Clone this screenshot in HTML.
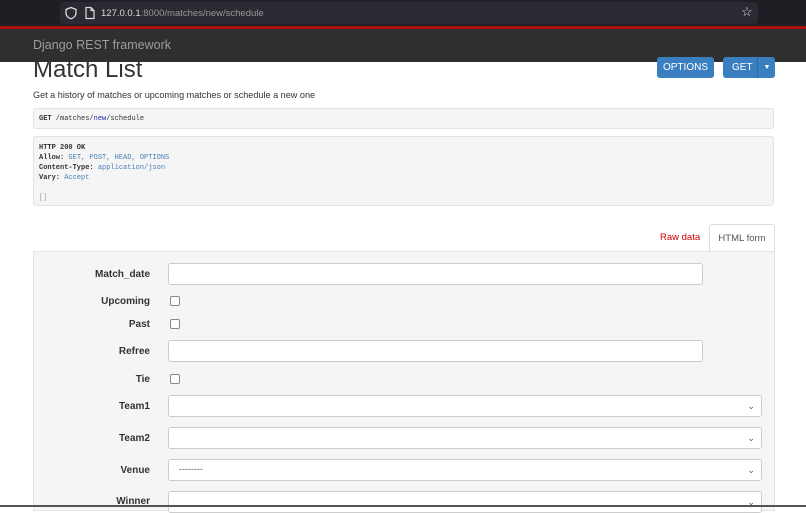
<!DOCTYPE html><html><head><style>
body{margin:0;width:806px;height:507px;overflow:hidden;background:#fff;font-family:"Liberation Sans",sans-serif;position:relative}
.a{position:absolute}
.mono{font-family:"Liberation Mono",monospace;font-size:7px;color:#333}
.b{color:#4a7fb5}
.lbl{position:absolute;right:656px;font-size:10px;font-weight:bold;color:#333;text-align:right}
.in{position:absolute;left:168px;height:22px;background:#fff;border:1px solid #ccc;border-radius:3px;box-sizing:border-box}
.cb{position:absolute;left:170px;width:8px;height:8px;border:1px solid #888;border-radius:2px;background:#fff}
.chev{position:absolute;right:6px;top:5px;font-size:9px;color:#555}
</style></head><body>
<div class="a" style="left:0;top:0;width:806px;height:27px;background:#1f1e25"></div>
<div class="a" style="left:60px;top:2px;width:698px;height:22px;background:#2b2a33;border-radius:4px"></div>
<svg class="a" style="left:64px;top:6px" width="14" height="14" viewBox="0 0 14 14"><path d="M7 1.5L12 3.5V7C12 10 9.5 12 7 12.8C4.5 12 2 10 2 7V3.5Z" fill="none" stroke="#ddd" stroke-width="1.3"/></svg>
<svg class="a" style="left:84px;top:6px" width="12" height="14" viewBox="0 0 12 14"><path d="M2 1.5H7L10 4.5V12.5H2Z M7 1.5V4.5H10" fill="none" stroke="#ddd" stroke-width="1.2"/></svg>
<div class="a" style="left:101px;top:8px;font-size:9.5px;color:#ddd">127.0.0.1<span style="color:#999">:8000/matches/new/schedule</span></div>
<div class="a" style="left:741px;top:4px;font-size:13px;color:#ddd">☆</div>
<div class="a" style="left:0;top:26px;width:806px;height:3px;background:#a11"></div>
<div class="a" style="left:0;top:29px;width:806px;height:33px;background:#2f2f2f"></div>
<div class="a" style="left:33px;top:38px;font-size:12.5px;color:#9d9d9d">Django REST framework</div>
<div class="a" style="left:33px;top:56px;font-size:24px;color:#333">Match List</div>
<div class="a" style="left:657px;top:57px;width:57px;height:21px;background:#3a80c0;border-radius:3px;color:#fff;font-size:10px;line-height:21px;text-align:center">OPTIONS</div>
<div class="a" style="left:723px;top:57px;width:52px;height:21px;background:#3a80c0;border-radius:3px;color:#fff;font-size:10px;line-height:21px"><span style="margin-left:9px">GET</span><span style="position:absolute;left:34px;top:0;border-left:1px solid #2d6aa5;height:21px;width:18px;text-align:center;font-size:7px">▼</span></div>
<div class="a" style="left:33px;top:90px;font-size:9.1px;color:#333">Get a history of matches or upcoming matches or schedule a new one</div>
<div class="a mono" style="left:33px;top:108px;width:741px;height:21px;box-sizing:border-box;background:#f5f5f5;border:1px solid #e3e3e3;border-radius:3px;padding:6px 5px"><b>GET</b> /matches/<span style="color:#22a">new</span>/schedule</div>
<div class="a mono" style="left:33px;top:136px;width:741px;height:70px;box-sizing:border-box;background:#f5f5f5;border:1px solid #e3e3e3;border-radius:3px;padding:6px 5px;line-height:10px"><b>HTTP 200 OK</b><br><b>Allow:</b> <span class="b">GET, POST, HEAD, OPTIONS</span><br><b>Content-Type:</b> <span class="b">application/json</span><br><b>Vary:</b> <span class="b">Accept</span><br><br><span style="color:#999">[]</span></div>
<div class="a" style="left:660px;top:232px;font-size:9.5px;color:#c00">Raw data</div>
<div class="a" style="left:709px;top:224px;width:66px;height:28px;background:#fff;border:1px solid #ddd;border-bottom:none;border-radius:3px 3px 0 0;box-sizing:border-box;font-size:9.5px;color:#555;text-align:center;line-height:27px">HTML form</div>
<div class="a" style="left:33px;top:251px;width:742px;height:260px;background:#f5f5f5;border:1px solid #e3e3e3;box-sizing:border-box"></div>
<div class="lbl" style="top:269px">Match_date</div><div class="in" style="top:263px;width:535px"></div>
<div class="lbl" style="top:296px">Upcoming</div><div class="cb" style="top:296px"></div>
<div class="lbl" style="top:319px">Past</div><div class="cb" style="top:319px"></div>
<div class="lbl" style="top:346px">Refree</div><div class="in" style="top:340px;width:535px"></div>
<div class="lbl" style="top:374px">Tie</div><div class="cb" style="top:374px"></div>
<div class="lbl" style="top:401px">Team1</div><div class="in" style="top:395px;width:594px"><span class="chev">⌄</span></div>
<div class="lbl" style="top:433px">Team2</div><div class="in" style="top:427px;width:594px"><span class="chev">⌄</span></div>
<div class="lbl" style="top:465px">Venue</div><div class="in" style="top:459px;width:594px"><span style="position:absolute;left:10px;top:4px;font-size:9px;color:#555">--------</span><span class="chev">⌄</span></div>
<div class="lbl" style="top:496px">Winner</div><div class="in" style="top:491px;width:594px"><span class="chev">⌄</span></div>
<div class="a" style="left:0;top:505px;width:806px;height:2px;background:#555"></div>
</body></html>
